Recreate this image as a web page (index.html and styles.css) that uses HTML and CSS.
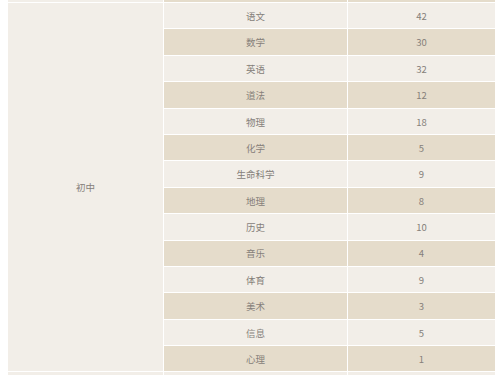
FILE: index.html
```html
<!DOCTYPE html>
<html lang="zh-CN">
<head>
<meta charset="utf-8">
<title>课时表</title>
<link rel="stylesheet" href="styles.css">
</head>
<body>
<div class="table">
  <div class="cell light stub"></div>
  <div class="cell tan stub"></div>
  <div class="cell tan stub"></div>

  <div class="cell light level">初中</div>

  <div class="cell light">语文</div><div class="cell light">42</div>
  <div class="cell tan">数学</div><div class="cell tan">30</div>
  <div class="cell light">英语</div><div class="cell light">32</div>
  <div class="cell tan">道法</div><div class="cell tan">12</div>
  <div class="cell light">物理</div><div class="cell light">18</div>
  <div class="cell tan">化学</div><div class="cell tan">5</div>
  <div class="cell light">生命科学</div><div class="cell light">9</div>
  <div class="cell tan">地理</div><div class="cell tan">8</div>
  <div class="cell light">历史</div><div class="cell light">10</div>
  <div class="cell tan">音乐</div><div class="cell tan">4</div>
  <div class="cell light">体育</div><div class="cell light">9</div>
  <div class="cell tan">美术</div><div class="cell tan">3</div>
  <div class="cell light">信息</div><div class="cell light">5</div>
  <div class="cell tan">心理</div><div class="cell tan">1</div>

  <div class="cell light stub"></div>
  <div class="cell light stub"></div>
  <div class="cell light stub"></div>
</div>
</body>
</html>
```
FILE: styles.css
```css
html, body {
  margin: 0;
  padding: 0;
  background: #ffffff;
  overflow: hidden;
}
body {
  font-family: "Noto Sans CJK SC", "Microsoft YaHei", sans-serif;
  font-size: 9.5px;
  color: #85807a;
}
.table {
  margin-left: 8px;
  margin-top: 0;
  width: 487px;
  display: grid;
  grid-template-columns: 155px 183px 147px;
  grid-template-rows: 2px repeat(14, 25.4px) 10px;
  gap: 1px;
  background: #ffffff;
}
.cell {
  display: flex;
  align-items: center;
  justify-content: center;
  line-height: 1;
  padding-top: 2px;
}
.stub { padding-top: 0; }
.light { background: #f2eee8; }
.tan { background: #e5dccb; }
.level {
  grid-row: 2 / span 14;
  grid-column: 1;
}
```
